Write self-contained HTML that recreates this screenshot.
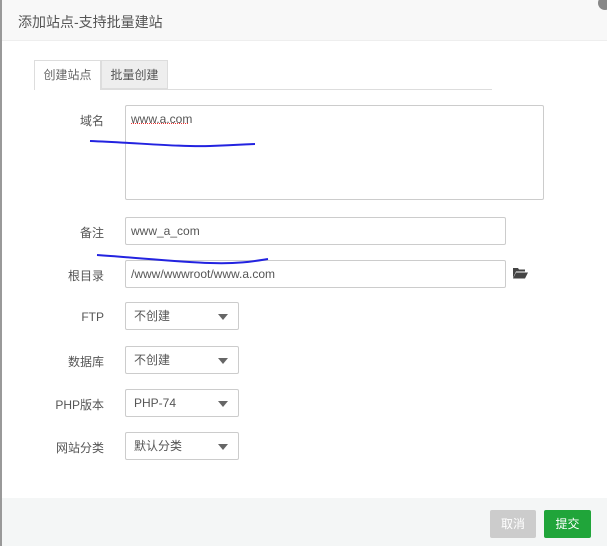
<!DOCTYPE html>
<html><head><meta charset="utf-8"><style>
*{margin:0;padding:0;box-sizing:border-box}
body{width:607px;height:546px;overflow:hidden;background:#fff;font-family:"Liberation Sans","Noto Sans CJK SC",sans-serif;font-size:12px;color:#555;position:relative}
.abs{position:absolute}
.hdr{left:0;top:0;width:607px;height:41px;background:#f8f8f8;border-bottom:1px solid #eee}
.lbl{width:80px;text-align:right;color:#555;font-size:12px}
.in{border:1px solid #ccc;border-radius:2px;background:#fff;color:#555;padding-left:5px;font-size:12px}
.sel{border:1px solid #ccc;border-radius:2px;background:#fff;width:114px;height:28px;padding-left:8px;line-height:26px;color:#555}
.sel:after{content:"";position:absolute;right:10px;top:11px;border-left:5px solid transparent;border-right:5px solid transparent;border-top:6px solid #666}
</style></head><body>
<div class="abs hdr"></div>
<div class="abs" style="left:0;top:0;width:2px;height:546px;background:#999"></div>
<div class="abs" style="left:18px;top:12px;font-size:14px;color:#555">添加站点-支持批量建站</div>
<div class="abs" style="left:598px;top:-4px;width:14px;height:14px;border-radius:50%;background:#888"></div>

<div class="abs" style="left:34px;top:89px;width:458px;height:1px;background:#ddd"></div>
<div class="abs" style="left:34px;top:60px;width:67px;height:30px;border:1px solid #ddd;border-bottom:none;background:#fff;text-align:center;line-height:28px;color:#666">创建站点</div>
<div class="abs" style="left:101px;top:60px;width:67px;height:29px;border:1px solid #ddd;background:#eee;text-align:center;line-height:28px;color:#555">批量创建</div>

<div class="abs lbl" style="left:24px;top:112px">域名</div>
<div class="abs in" style="left:125px;top:105px;width:419px;height:95px;padding-top:6px">www.a.com</div>
<div class="abs" style="left:131px;top:123px;width:57px;border-bottom:1px dotted #e33"></div>

<div class="abs lbl" style="left:24px;top:224px">备注</div>
<div class="abs in" style="left:125px;top:217px;width:381px;height:28px;line-height:26px">www_a_com</div>

<div class="abs lbl" style="left:24px;top:267px">根目录</div>
<div class="abs in" style="left:125px;top:260px;width:381px;height:28px;line-height:26px">/www/wwwroot/www.a.com</div>
<svg class="abs" style="left:513px;top:267px" width="15" height="12" viewBox="0 0 15 12"><path d="M0 1h5l1 1.5h6v2H3L0 11z" fill="#444"/><path d="M3 5.5h12L12 11.5H0z" fill="#444"/></svg>

<div class="abs lbl" style="left:24px;top:310px">FTP</div>
<div class="abs sel" style="left:125px;top:302px">不创建</div>
<div class="abs lbl" style="left:24px;top:353px">数据库</div>
<div class="abs sel" style="left:125px;top:346px">不创建</div>
<div class="abs lbl" style="left:24px;top:396px">PHP版本</div>
<div class="abs sel" style="left:125px;top:389px">PHP-74</div>
<div class="abs lbl" style="left:24px;top:439px">网站分类</div>
<div class="abs sel" style="left:125px;top:432px">默认分类</div>

<svg class="abs" style="left:0;top:0" width="607" height="546"><path d="M90 141C140 143 180 147 210 146S250 144 255 144" stroke="#2323e0" stroke-width="2" fill="none"/><path d="M97 255C140 258 180 262 210 263S255 261 268 259" stroke="#2323e0" stroke-width="2" fill="none"/></svg>

<div class="abs" style="left:2px;top:498px;width:605px;height:48px;background:#f4f6f6"></div>
<div class="abs" style="left:490px;top:510px;width:46px;height:28px;background:#ccc;border-radius:2px;color:#fff;text-align:center;line-height:28px">取消</div>
<div class="abs" style="left:544px;top:510px;width:47px;height:28px;background:#20a53a;border-radius:2px;color:#fff;text-align:center;line-height:28px">提交</div>
</body></html>
